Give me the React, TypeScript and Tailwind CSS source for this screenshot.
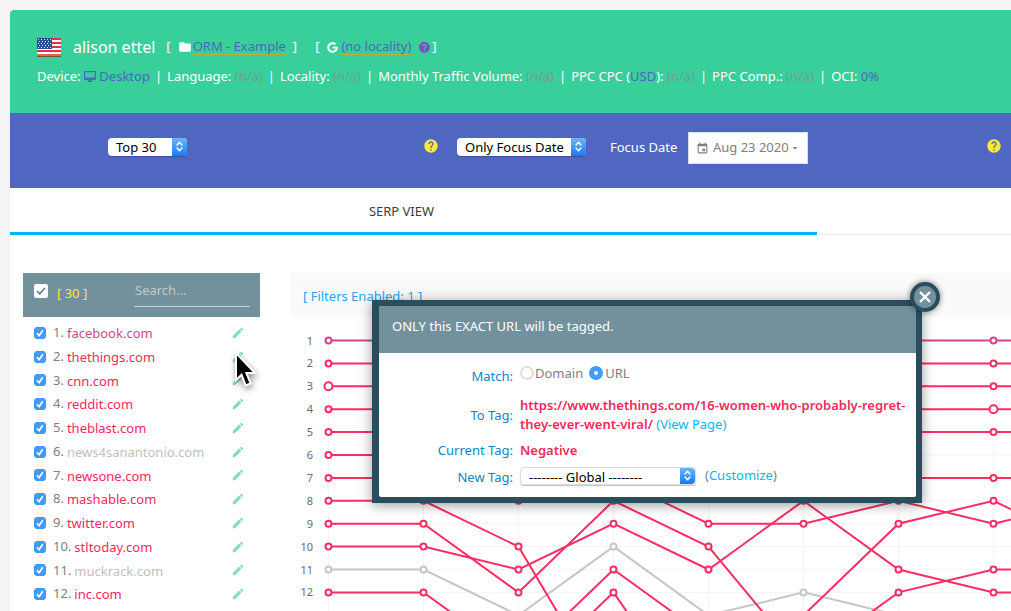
import { Fragment, useState, type ReactNode } from "react";
import { FaGoogle } from "react-icons/fa";
import { MdArrowDropDown, MdEdit, MdEvent, MdFolder, MdHelp } from "react-icons/md";

type Tone = "negative" | "owned" | "neutral";

const toneText: Record<Tone, string> = {
  negative: "text-[#f5285f]",
  owned: "text-[#d5458d]",
  neutral: "text-[#bfbfbf]",
};

const toneStroke: Record<Tone, string> = {
  negative: "stroke-[#fc2d62]",
  owned: "stroke-[#d5458d]",
  neutral: "stroke-[#c6c6c6]",
};

const sites: { name: string; tone: Tone }[] = [
  { name: "facebook.com", tone: "owned" },
  { name: "thethings.com", tone: "negative" },
  { name: "cnn.com", tone: "negative" },
  { name: "reddit.com", tone: "negative" },
  { name: "theblast.com", tone: "negative" },
  { name: "news4sanantonio.com", tone: "neutral" },
  { name: "newsone.com", tone: "negative" },
  { name: "mashable.com", tone: "negative" },
  { name: "twitter.com", tone: "negative" },
  { name: "stltoday.com", tone: "negative" },
  { name: "muckrack.com", tone: "neutral" },
  { name: "inc.com", tone: "negative" },
];

// rank of each result, one entry per crawl date
const series: { tone: Tone; ranks: number[]; big?: number }[] = [
  { tone: "neutral", ranks: [11, 11, 13, 10, 13, 12, 13, 15, 15] },
  { tone: "owned", ranks: [1, 1, 1, 1, 1, 1, 1, 1, 1] },
  { tone: "negative", ranks: [2, 2, 2, 2, 2, 2, 2, 2, 2] },
  { tone: "negative", ranks: [3, 3, 3, 3, 3, 3, 3, 3, 3], big: 0 },
  { tone: "negative", ranks: [4, 4, 4, 4, 4, 4, 4, 4, 4], big: 7 },
  { tone: "negative", ranks: [5, 5, 5, 5, 5, 5, 5, 5, 5] },
  { tone: "negative", ranks: [6, 6, 7, 7, 9, 9, 8, 9, 8] },
  { tone: "negative", ranks: [7, 7, 8, 6, 7, 7, 7, 7, 7] },
  { tone: "negative", ranks: [8, 8, 10, 17, 17, 17, 17, 17, 17] },
  { tone: "negative", ranks: [9, 9, 12, 8, 10, 15, 12, 11, 11] },
  { tone: "negative", ranks: [10, 10, 11, 9, 11, 8, 11, 12, 12] },
  { tone: "negative", ranks: [12, 12, 15, 11, 14, 13, 9, 8, 10] },
  { tone: "negative", ranks: [13, 13, 16, 12, 18, 18, 18, 18, 18] },
];

const px = (col: number) => 38.5 + col * 95;
const py = (rank: number) => 23.5 + (rank - 1) * 22.9;

function RankChart() {
  const ranks = Array.from({ length: 12 }, (_, i) => i + 1);
  return (
    <svg width="800" height="320" className="block" role="img" aria-label="Rank history">
      <g className="stroke-[#f4f4f4]">
        {ranks.map((r) => (
          <line key={r} x1={px(0)} x2="800" y1={py(r)} y2={py(r)} />
        ))}
        {ranks.slice(0, 9).map((_, c) => (
          <line key={c} x1={px(c)} x2={px(c)} y1={py(1)} y2="320" />
        ))}
      </g>
      {ranks.map((r) => (
        <text key={r} x="23" y={py(r) + 4} textAnchor="end" className="fill-[#6b6b6b] text-[11px]">
          {r}
        </text>
      ))}
      {series.map((s, i) => (
        <g key={i} className={toneStroke[s.tone]} strokeWidth="2" fill="none">
          <polyline points={s.ranks.map((r, c) => `${px(c)},${py(r)}`).join(" ")} />
          {s.ranks.map((r, c) => (
            <circle key={c} cx={px(c)} cy={py(r)} r={s.big === c ? 4 : 3} fill="#fff" />
          ))}
        </g>
      ))}
    </svg>
  );
}

function UsFlag() {
  return (
    <svg width="24" height="19" viewBox="0 0 24 19" role="img" aria-label="United States">
      <rect width="24" height="18" fill="#fff" />
      {[0, 4, 8, 12].map((y) => (
        <rect key={y} y={y} width="24" height="2" fill="#d8334f" />
      ))}
      <rect y="16" width="24" height="2" fill="#e8663a" />
      <rect y="18" width="24" height="1" fill="#6d5a3c" />
      <rect width="15" height="11" fill="#2b4b94" />
      {[1, 3, 5, 7, 9].map((y) =>
        (y % 4 === 3 ? [2, 5, 8, 11] : [1, 4, 7, 10, 13]).map((x) => (
          <rect key={`${x}-${y}`} x={x} y={y} width="1" height="1" fill="#dfe6f5" />
        )),
      )}
    </svg>
  );
}

function MacSelect({ label, value, className }: { label: string; value: string; className: string }) {
  return (
    <span className={`relative inline-flex h-[18px] rounded-sm shadow-[0_1px_1px_rgba(0,0,0,0.25)] ${className}`}>
      <select
        aria-label={label}
        className="w-full appearance-none rounded-sm bg-white pl-2 text-[13px] leading-[18px] text-black"
      >
        <option>{value}</option>
      </select>
      <span className="pointer-events-none absolute inset-y-0 right-0 flex w-[15px] items-center justify-center rounded-r-sm bg-linear-to-b from-[#6cb3fa] to-[#0a7bff]">
        <svg width="7" height="11" viewBox="0 0 7 11" fill="none" stroke="#fff" strokeWidth="1.4">
          <path d="M1 4 3.5 1.2 6 4M1 7l2.5 2.8L6 7" strokeLinecap="round" strokeLinejoin="round" />
        </svg>
      </span>
    </span>
  );
}

function Help({ className }: { className: string }) {
  return (
    <button type="button" aria-label="Help" className={`mb-1 ${className}`}>
      <MdHelp size={16} />
    </button>
  );
}

function Stat({ label, children }: { label: ReactNode; children: ReactNode }) {
  return (
    <span className="whitespace-nowrap">
      {label} {children}
    </span>
  );
}

function KeywordHeader() {
  const na = <span className="text-[#729b98]">(n/a)</span>;
  const stats = [
    <Stat label="Device:">
      <a href="#device" className="text-[#4b68bf]">
        <svg width="12" height="11" viewBox="0 0 12 11" fill="currentColor" className="inline align-[-1px]">
          <path
            fillRule="evenodd"
            d="M1 0h10a1 1 0 0 1 1 1v7a1 1 0 0 1-1 1H7.500v1H8.500v1H3.500v-1h1V9H1a1 1 0 0 1-1-1V1a1 1 0 0 1 1-1Zm.2 1.200v5.300h9.600V1.200Z"
          />
        </svg>{" "}
        Desktop
      </a>
    </Stat>,
    <Stat label="Language:">{na}</Stat>,
    <Stat label="Locality:">{na}</Stat>,
    <Stat label="Monthly Traffic Volume:">{na}</Stat>,
    <Stat
      label={
        <>
          PPC CPC (
          <a href="#currency" className="text-[#4b68bf]">
            USD
          </a>
          ):
        </>
      }
    >
      {na}
    </Stat>,
    <Stat label="PPC Comp.:">{na}</Stat>,
    <Stat label="OCI:">
      <span className="text-[#4b68bf]">0%</span>
    </Stat>,
  ];

  return (
    <header className="rounded-tl-sm bg-[#39cf9a] px-[27px] pt-[23px] pb-[25px] text-white">
      <div className="flex h-7 items-center">
        <UsFlag />
        <h1 className="ml-3 text-base">alison ettel</h1>
        <span className="ml-[11px]">[</span>
        <MdFolder size={14} className="ml-[7px]" />
        <a href="#project" className="ml-px border-b border-[#c9a63e] leading-[15px] text-[#4b68bf]">
          ORM - Example
        </a>
        <span className="ml-[7px]">]</span>
        <span className="ml-[18px]">[</span>
        <FaGoogle size={11} className="ml-2" />
        <a href="#locality" className="ml-[3px] border-b border-[#c9a63e] leading-[15px] text-[#4b68bf]">
          (no locality)
        </a>
        <button type="button" aria-label="Locality help" className="mr-px ml-[7px] text-[#7b50c4]">
          <MdHelp size={13} />
        </button>
        <span>]</span>
      </div>
      <div className="mt-[5px] flex h-[22px] items-center gap-[5px]">
        {stats.map((stat, i) => (
          <Fragment key={i}>
            {i > 0 && <span>|</span>}
            {stat}
          </Fragment>
        ))}
      </div>
    </header>
  );
}

function FilterBar() {
  return (
    <div className="flex items-center bg-[#5067c1] pt-[19px] pr-[9px] pb-6 pl-[98px] text-white">
      <MacSelect label="Results shown" value="Top 30" className="mb-[3px] w-[79px]" />
      <Help className="ml-[236px] text-[#ffe838]" />
      <MacSelect label="Date mode" value="Only Focus Date" className="mb-[3px] ml-[18px] w-[129px]" />
      <span className="ml-6">Focus Date</span>
      <button
        type="button"
        className="ml-[11px] flex h-8 w-[120px] items-center justify-center border border-[#dde] bg-white text-[#808080]"
      >
        <MdEvent size={13} className="mr-1" />
        Aug 23 2020
        <MdArrowDropDown size={12} />
      </button>
      <Help className="ml-auto text-[#ffe838]" />
    </div>
  );
}

function SiteList() {
  return (
    <aside className="w-[237px] shrink-0">
      <div className="flex h-11 items-center bg-[#73919d] pr-[10px] pb-0.5 pl-[11px]">
        <label className="relative mb-1.5 flex size-[14px] items-center justify-center">
          <input
            type="checkbox"
            defaultChecked
            aria-label="Select all"
            className="peer size-[14px] appearance-none rounded-[2px] bg-white"
          />
          <svg
            width="10"
            height="8"
            viewBox="0 0 10 8"
            fill="none"
            className="pointer-events-none invisible absolute stroke-[#5b7d8b] stroke-[1.5] peer-checked:visible"
          >
            <path d="m1 4 2.7 2.8L9 1" />
          </svg>
        </label>
        <span className="ml-[9px] text-[#ffe838]">[ 30 ]</span>
        <input
          type="search"
          aria-label="Search"
          placeholder="Search..."
          className="ml-auto h-[26px] w-[116px] border-b border-[#c5d0d5] bg-transparent px-px pb-2 outline-none placeholder:text-[#bccbd1]"
        />
      </div>
      <ul className="grid h-[289px] auto-rows-fr pt-1">
        {sites.map((site, i) => (
          <li key={site.name} className="flex items-center px-[11px]">
            <span className="relative flex size-3 items-center justify-center">
              <input
                type="checkbox"
                defaultChecked
                id={`site-${i}`}
                aria-label={site.name}
                className="peer size-3 appearance-none rounded-[3px] border border-[#b5b5b5] checked:border-[#3c93f8] checked:bg-[#459bfb]"
              />
              <svg
                width="8"
                height="8"
                viewBox="0 0 8 8"
                fill="none"
                stroke="#fff"
                strokeWidth="1.6"
                className="pointer-events-none invisible absolute peer-checked:visible"
              >
                <path d="m1 4.2 2.1 2.4L6.8 1.2" />
              </svg>
            </span>
            <label htmlFor={`site-${i}`} className="ml-[7px] text-[#808080]">
              {i + 1}.
            </label>
            <a href={`#${site.name}`} className={`ml-[3px] pt-0.5 ${toneText[site.tone]}`}>
              {site.name}
            </a>
            <button type="button" aria-label={`Tag ${site.name}`} className="ml-auto mr-1 text-[#85dcbd]">
              <MdEdit size={14} />
            </button>
          </li>
        ))}
      </ul>
    </aside>
  );
}

const radioClass =
  "size-[14px] appearance-none rounded-full border-2 border-[#dedede] bg-white checked:border-[5px] checked:border-[#459bfb]";

function TagDialog({ onClose }: { onClose: () => void }) {
  return (
    <div
      role="dialog"
      aria-label="Tag URL"
      className="absolute top-[300px] left-[372px] w-[550px] border-[6px] border-l-[7px] border-[#294e5d] bg-[#294e5d] shadow-[0_2px_12px_rgba(0,0,0,0.4)]"
    >
      <button
        type="button"
        aria-label="Close"
        onClick={onClose}
        className="absolute -top-6 -right-6 flex size-[30px] items-center justify-center rounded-full border-4 border-[#294e5d] bg-[#73919d] shadow-[0_0_6px_rgba(0,0,0,0.5)]"
      >
        <svg width="12" height="12" viewBox="0 0 12 12" stroke="#fff" strokeWidth="2.4">
          <path d="m1 1 10 10M11 1 1 11" />
        </svg>
      </button>
      <div className="flex h-[47px] items-center bg-[#73919d] px-[13px] pb-1.5 text-white">
        ONLY this EXACT URL will be tagged.
      </div>
      <div className="grid grid-cols-[134px_1fr] gap-x-[7px] rounded-b-xs bg-white pt-[7px] pb-[10px] text-[#808080]">
        <span className="pt-1.5 text-right leading-5 text-[#0a86c6]">Match:</span>
        <div className="flex h-9 items-start gap-1.5 pt-[3px] leading-5">
          <label className="flex items-center gap-px">
            <input type="radio" name="match" className={radioClass} />
            Domain
          </label>
          <label className="flex items-center gap-0.5">
            <input type="radio" name="match" defaultChecked className={radioClass} />
            URL
          </label>
        </div>
        <span className="self-center text-right leading-5 text-[#0a86c6]">To Tag:</span>
        <p className="leading-[19px]">
          <b className="font-semibold text-[#f5285f]">
            https://www.thethings.com/16-women-who-probably-regret-
            <br />
            they-ever-went-viral/
          </b>{" "}
          <a href="#view" className="text-[#10b3f5]">
            (View Page)
          </a>
        </p>
        <span className="pt-1.5 text-right leading-5 text-[#0a86c6]">Current Tag:</span>
        <b className="pt-1.5 leading-5 font-semibold text-[#f5285f]">Negative</b>
        <span className="pt-[7px] text-right leading-5 text-[#0a86c6]">New Tag:</span>
        <div className="flex items-center gap-[9px] pt-1">
          <MacSelect label="New tag" value="-------- Global --------" className="w-[176px] border border-[#ddd]" />
          <span>
            (
            <a href="#customize" className="text-[#10b3f5]">
              Customize
            </a>
            )
          </span>
        </div>
      </div>
    </div>
  );
}

export default function App() {
  const [open, setOpen] = useState(true);

  return (
    <main className="relative h-screen overflow-hidden bg-[#f4f4f4] pt-[10px] pl-[10px] font-['Noto_Sans',sans-serif] text-[13px]">
      <KeywordHeader />
      <FilterBar />
      <div className="min-h-screen bg-white">
        <nav className="border-b border-[#eee]">
          <button
            type="button"
            className="-mb-px block h-[47px] w-[807px] border-b-3 border-[#03b5fa] pt-[3px] pr-6 text-[#3c3c3c]"
          >
            SERP VIEW
          </button>
        </nav>
        <div className="flex gap-[30px] pt-[38px] pl-[13px]">
          <SiteList />
          <section className="min-w-0 grow overflow-hidden">
            <div className="flex h-11 items-center bg-[#fafafa] pt-1 pl-[13px]">
              <a href="#filters" className="text-[#29a3ee]">
                [ Filters Enabled: 1 ]
              </a>
            </div>
            <RankChart />
          </section>
        </div>
      </div>
      {open && <TagDialog onClose={() => setOpen(false)} />}
      <svg
        width="34"
        height="44"
        viewBox="0 0 34 44"
        aria-hidden="true"
        className="pointer-events-none absolute top-[349px] left-[230px] drop-shadow-[1px_3px_3px_rgba(0,0,0,0.45)]"
      >
        <path
          d="M6 4v27l5.600-5.200 4 10.600 5-2-4.200-10.400H25z"
          fill="#000"
          stroke="#fff"
          strokeWidth="2"
        />
      </svg>
    </main>
  );
}
